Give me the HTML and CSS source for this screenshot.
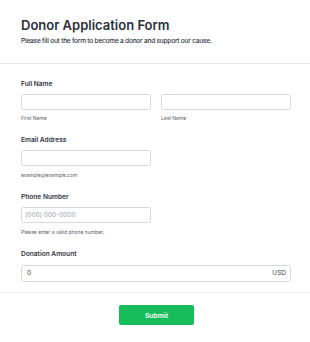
FILE: index.html
```html
<!DOCTYPE html>
<html>
<head>
<meta charset="utf-8">
<link rel="stylesheet" href="styles.css">
</head>
<body>
<div class="page">
  <header class="header">
    <h1 class="title">Donor Application Form</h1>
    <p class="subtitle">Please fill out the form to become a donor and support our cause.</p>
  </header>
  <form class="form">
    <div class="field">
      <div class="label">Full Name</div>
      <div class="row">
        <div class="col">
          <div class="input"></div>
          <div class="sublabel">First Name</div>
        </div>
        <div class="col">
          <div class="input"></div>
          <div class="sublabel">Last Name</div>
        </div>
      </div>
    </div>
    <div class="field">
      <div class="label">Email Address</div>
      <div class="col half">
        <div class="input"></div>
        <div class="sublabel">example@example.com</div>
      </div>
    </div>
    <div class="field">
      <div class="label">Phone Number</div>
      <div class="col half">
        <div class="input"><span class="placeholder">(000) 000-0000</span></div>
        <div class="sublabel">Please enter a valid phone number.</div>
      </div>
    </div>
    <div class="field donation">
      <div class="label">Donation Amount</div>
      <div class="input amount"><span>0</span><span>USD</span></div>
    </div>
  </form>
  <div class="footer">
    <button class="submit" type="button">Submit</button>
  </div>
</div>
</body>
</html>
```
FILE: styles.css
```css
* { box-sizing: border-box; }
html, body { margin: 0; padding: 0; background: #fff; }
body {
  font-family: Inter, "Noto Sans", "Liberation Sans", sans-serif;
  color: #30343d;
  width: 310px;
}
.header {
  padding: 16.5px 21px 17px;
  border-bottom: 1px solid #e6e9ef;
}
.title {
  margin: 0;
  font-size: 13px;
  line-height: 17px;
  font-weight: 600;
  color: #2c303b;
}
.subtitle {
  margin: 3px 0 0;
  font-size: 6.55px;
  line-height: 9px;
  font-weight: 500;
  letter-spacing: -0.22px;
  color: #30343f;
}
.form {
  padding: 15px 19px 10px 21px;
  border-bottom: 1px solid #eef0f4;
}
.field { margin-bottom: 13px; }
.field.donation { margin-bottom: 0; }
.label {
  font-size: 6.6px;
  line-height: 10px;
  font-weight: 600;
  margin-bottom: 5px;
  color: #33363e;
}
.donation .label { margin-bottom: 6.5px; }
.row {
  display: flex;
  gap: 10px;
}
.col { flex: 1; }
.col.half { width: 130px; flex: none; }
.input {
  height: 16px;
  border: 1px solid #d5d8de;
  border-radius: 2.5px;
  background: #fff;
  display: flex;
  align-items: center;
  padding: 0 4px 0 3px;
  font-size: 6.5px;
}
.placeholder { color: #9aa0ab; }
.amount {
  justify-content: space-between;
  padding: 0 4px 0 5px;
  color: #3e4148;
  height: 16.5px;
}
.sublabel {
  margin-top: 4.7px;
  font-size: 5px;
  line-height: 8px;
  color: #5b606b;
}
.footer {
  display: flex;
  justify-content: center;
  padding: 12.5px 0 0 3px;
}
.submit {
  width: 75px;
  height: 20px;
  border: none;
  border-radius: 2px;
  background: #18bd5b;
  color: #fff;
  font-family: Inter, "Noto Sans", sans-serif;
  font-size: 6.8px;
  font-weight: 600;
  padding: 0;
}
```
